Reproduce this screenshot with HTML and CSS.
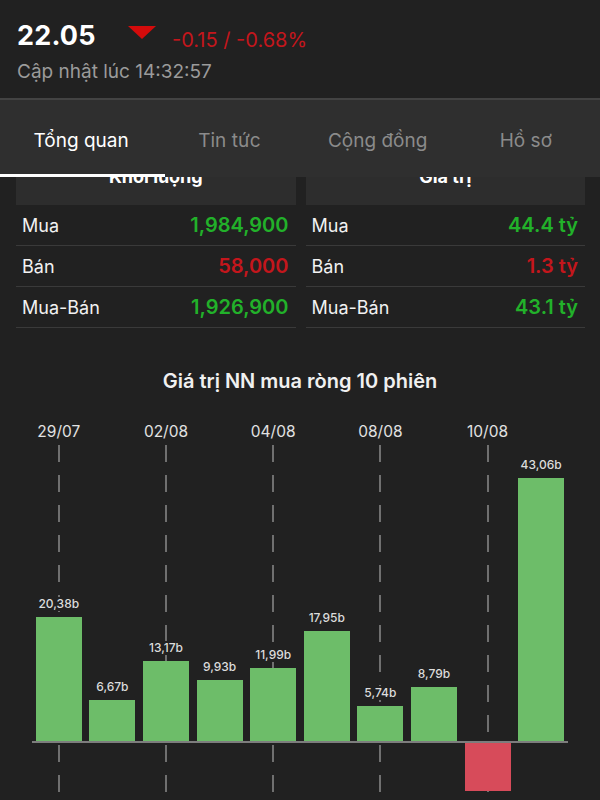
FILE: index.html
```html
<!DOCTYPE html>
<html lang="vi">
<head>
<meta charset="utf-8">
<title>22.05</title>
<link rel="stylesheet" href="styles.css">
</head>
<body>
<header class="quote">
  <div class="price-row">
    <span class="price">22.05</span>
    <svg class="arrow" width="28" height="13" viewBox="0 0 28 13"><path d="M0 0H28L14 13Z" fill="#d40b0b"/></svg>
    <span class="change">-0.15 / -0.68%</span>
  </div>
  <div class="updated">Cập nhật lúc 14:32:57</div>
</header>

<nav class="tabs">
  <div class="tab active">Tổng quan</div>
  <div class="tab">Tin tức</div>
  <div class="tab">Cộng đồng</div>
  <div class="tab">Hồ sơ</div>
  <div class="indicator"></div>
</nav>

<main class="content">
  <section class="tables">
    <div class="table">
      <div class="thead">Khối lượng</div>
      <div class="row"><span>Mua</span><span class="val up">1,984,900</span></div>
      <div class="row"><span>Bán</span><span class="val down">58,000</span></div>
      <div class="row"><span>Mua-Bán</span><span class="val up">1,926,900</span></div>
    </div>
    <div class="table">
      <div class="thead">Giá trị</div>
      <div class="row"><span>Mua</span><span class="val up">44.4 tỷ</span></div>
      <div class="row"><span>Bán</span><span class="val down">1.3 tỷ</span></div>
      <div class="row"><span>Mua-Bán</span><span class="val up">43.1 tỷ</span></div>
    </div>
  </section>

  <h2 class="chart-title">Giá trị NN mua ròng 10 phiên</h2>

  <section class="chart">
    <div class="col tick">
      <div class="date">29/07</div>
      <div class="plot"><span class="lbl">20,38b</span><div class="bar" style="height:124px"></div></div>
      <div class="neg"></div>
    </div>
    <div class="col">
      <div class="date"></div>
      <div class="plot"><span class="lbl">6,67b</span><div class="bar" style="height:41px"></div></div>
      <div class="neg"></div>
    </div>
    <div class="col tick">
      <div class="date">02/08</div>
      <div class="plot"><span class="lbl">13,17b</span><div class="bar" style="height:80px"></div></div>
      <div class="neg"></div>
    </div>
    <div class="col">
      <div class="date"></div>
      <div class="plot"><span class="lbl">9,93b</span><div class="bar" style="height:61px"></div></div>
      <div class="neg"></div>
    </div>
    <div class="col tick">
      <div class="date">04/08</div>
      <div class="plot"><span class="lbl">11,99b</span><div class="bar" style="height:73px"></div></div>
      <div class="neg"></div>
    </div>
    <div class="col">
      <div class="date"></div>
      <div class="plot"><span class="lbl">17,95b</span><div class="bar" style="height:110px"></div></div>
      <div class="neg"></div>
    </div>
    <div class="col tick">
      <div class="date">08/08</div>
      <div class="plot"><span class="lbl">5,74b</span><div class="bar" style="height:35px"></div></div>
      <div class="neg"></div>
    </div>
    <div class="col">
      <div class="date"></div>
      <div class="plot"><span class="lbl">8,79b</span><div class="bar" style="height:54px"></div></div>
      <div class="neg"></div>
    </div>
    <div class="col tick">
      <div class="date">10/08</div>
      <div class="plot"></div>
      <div class="neg"><div class="bar red" style="height:48px"></div></div>
    </div>
    <div class="col">
      <div class="date"></div>
      <div class="plot"><span class="lbl">43,06b</span><div class="bar" style="height:263px"></div></div>
      <div class="neg"></div>
    </div>
  </section>
</main>
</body>
</html>
```

FILE: styles.css
```css
* { box-sizing: border-box; }

html, body {
  margin: 0;
  padding: 0;
  background: #212121;
  color: #fff;
  font-family: Inter, "Noto Sans", "Liberation Sans", sans-serif;
  overflow: hidden;
  height: 800px;
}

body { position: relative; }

.quote {
  height: 100px;
  padding: 17px 17px 0;
  border-bottom: 2px solid #434343;
  background: #212121;
}

.price-row {
  display: flex;
  align-items: center;
  height: 36px;
}

.price {
  font-size: 27px;
  font-weight: 700;
  letter-spacing: 0.2px;
  width: 111px;
}

.arrow { margin-top: -6px; }

.change {
  margin-left: 16px;
  margin-top: 9px;
  font-size: 20px;
  color: #c4161c;
}

.updated {
  margin-top: 7px;
  font-size: 19px;
  color: #9b9b9b;
}

.tabs {
  position: absolute;
  top: 100px;
  left: 0;
  right: 0;
  height: 77px;
  background: #2f2f2f;
  display: flex;
  padding: 0 0 3px 7px;
  z-index: 2;
}

.tab {
  width: 150px;
  display: flex;
  align-items: center;
  justify-content: center;
  font-size: 19px;
  color: #8b8b8b;
  padding-top: 6px;
}

.tab.active { color: #fff; }

.indicator {
  position: absolute;
  left: 0;
  bottom: 0;
  width: 165px;
  height: 3px;
  background: #fff;
}

.content { padding-top: 58px; }

.tables {
  display: flex;
  gap: 10px;
  padding: 0 15px 0 16px;
}

.table { flex: 1; }

.thead {
  height: 47px;
  background: #2d2d2d;
  display: flex;
  align-items: center;
  justify-content: center;
  font-size: 18px;
  font-weight: 700;
  padding-bottom: 11px;
}

.row {
  height: 41px;
  border-bottom: 1px solid #3a3a3a;
  display: flex;
  align-items: center;
  justify-content: space-between;
  padding: 0 7px 0 6px;
  font-size: 18px;
  color: #f2f2f2;
}

.val {
  font-size: 20px;
  font-weight: 600;
}

.up { color: #22b12a; }
.down { color: #c4161c; }

.chart-title {
  margin: 39px 0 0;
  height: 28px;
  line-height: 28px;
  text-align: center;
  font-size: 20px;
  font-weight: 600;
  color: #f0f0f0;
}

.chart {
  display: flex;
  margin: 25px 32px 0;
}

.col {
  flex: 1;
  display: flex;
  flex-direction: column;
  align-items: stretch;
}

.date {
  height: 24px;
  line-height: 24px;
  text-align: center;
  font-size: 15.5px;
  color: #e2e2e2;
}

.plot {
  height: 297px;
  display: flex;
  flex-direction: column;
  align-items: center;
  justify-content: flex-end;
}

.neg {
  height: 80px;
  border-top: 2px solid #7d7d7d;
  display: flex;
  flex-direction: column;
  align-items: center;
}

.tick .plot {
  background: repeating-linear-gradient(to bottom, transparent 0 1px, #707070 1px 18px, transparent 18px 30px) center top / 2px 100% no-repeat;
}

.tick .neg {
  background: repeating-linear-gradient(to bottom, transparent 0 2px, #707070 2px 19px, transparent 19px 30px) center top / 2px 100% no-repeat;
}

.lbl {
  font-size: 12px;
  line-height: 14px;
  font-weight: 500;
  color: #dcdcdc;
  margin-bottom: 6px;
  background: #212121;
  padding: 0 1px;
}

.bar {
  width: 46px;
  background: #6dbd69;
}

.bar.red { background: #d74b5a; }
```
